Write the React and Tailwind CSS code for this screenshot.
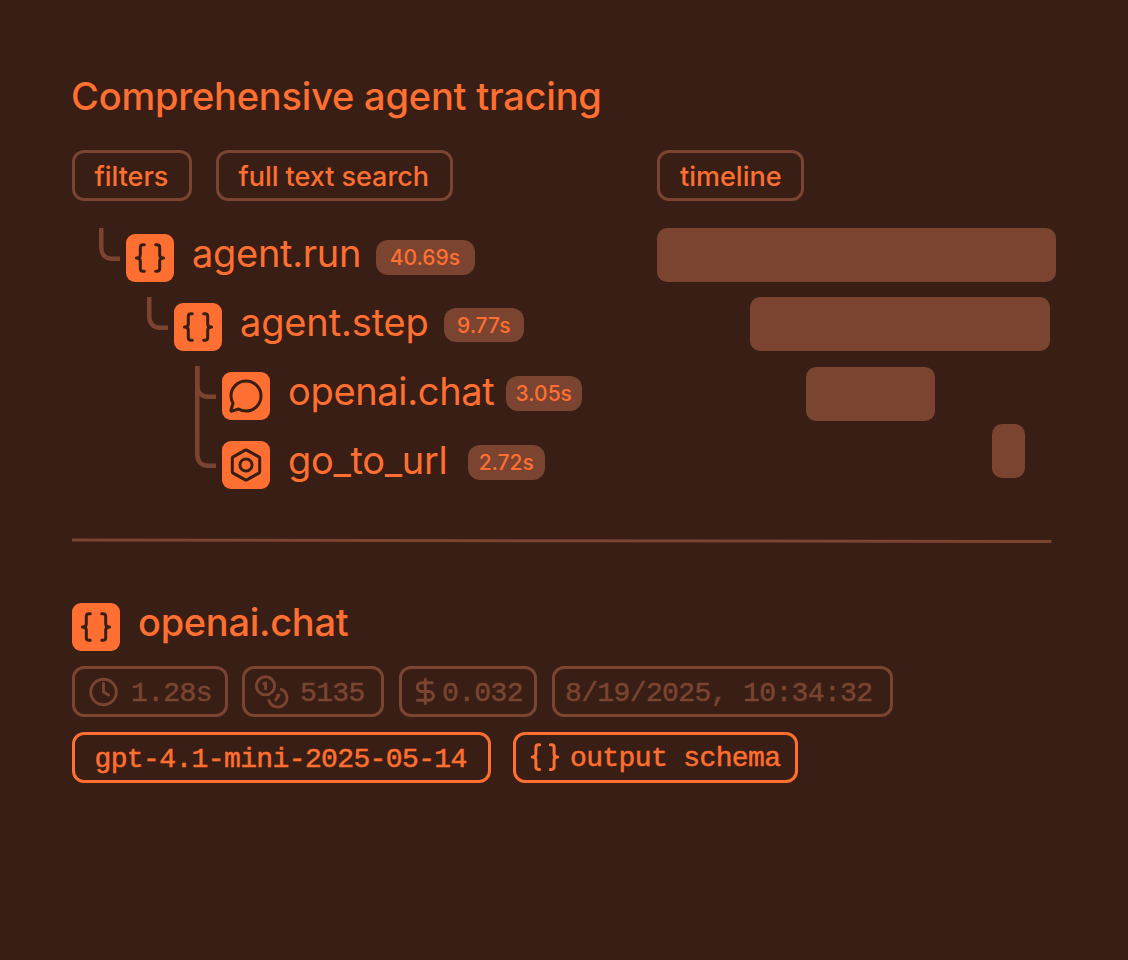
const LEFT_BRACE = 'M18.3 10.8h-1.2c-1.7 0-2.8 1.1-2.8 2.8v7.4c0 1.8-1.4 3-3.9 3 2.5 0 3.9 1.2 3.9 3v7.4c0 1.7 1.1 2.8 2.8 2.8h1.2';
const RIGHT_BRACE = 'M29.7 10.8h1.2c1.7 0 2.8 1.1 2.8 2.8v7.4c0 1.8 1.4 3 3.9 3-2.5 0-3.9 1.2-3.9 3v7.4c0 1.7-1.1 2.8-2.8 2.8h-1.2';

function Glyph({ kind }) {
  return (
    <svg
      viewBox="0 0 48 48"
      className="h-12 w-12 shrink-0 rounded-[9px] bg-[#ff6f31] text-[#381e14]"
      fill="none"
      stroke="currentColor"
      strokeWidth="3"
      strokeLinecap="round"
      strokeLinejoin="round"
    >
      {kind === 'braces' && (
        <>
          <path d={LEFT_BRACE} />
          <path d={RIGHT_BRACE} />
        </>
      )}
      {kind === 'chat' && (
        <path d="M24 39C32.28 39 39 32.28 39 24S32.28 9 24 9 9 15.72 9 24c0 2.73.73 5.29 2 7.5L8.9 38.1c-.2.7.3 1.2 1 1.1L16.5 37c2.2 1.28 4.77 2 7.5 2Z" />
      )}
      {kind === 'hex' && (
        <>
          <path d="M23.3 9.1a1.5 1.5 0 0 1 1.4 0l12.2 6.8a1.5 1.5 0 0 1 .8 1.3v13.6a1.5 1.5 0 0 1-.8 1.3l-12.2 6.8a1.5 1.5 0 0 1-1.4 0l-12.2-6.8a1.5 1.5 0 0 1-.8-1.3V17.2a1.5 1.5 0 0 1 .8-1.3Z" />
          <circle cx="24" cy="24" r="6.1" />
        </>
      )}
    </svg>
  );
}

function Connector({ continues }) {
  return (
    <svg
      viewBox="0 0 27 54"
      className="h-[54px] w-[27px] shrink-0 overflow-visible"
      fill="none"
      stroke="#7a4430"
      strokeWidth="4.5"
    >
      {continues && <path d="M2.25 0V70" />}
      <path d="M2.25 0V19.5C2.25 26 6 30.75 13 30.75H21" />
    </svg>
  );
}

function TreeRow({ indent, kind, name, nameClass, time, timeClass, continues }) {
  return (
    <div className={`flex h-[54px] ${indent}`}>
      <Connector continues={continues} />
      <div className="pt-1.5">
        <Glyph kind={kind} />
      </div>
      <span className={`ml-[18px] block shrink-0 whitespace-nowrap text-[38px] leading-[51px] ${nameClass}`}>
        {name}
      </span>
      <span
        className={`block h-[34.5px] shrink-0 rounded-xl bg-[#7a4430] text-center text-[21px] font-medium leading-[35px] ${timeClass}`}
      >
        {time}
      </span>
    </div>
  );
}

function Pill({ className, children }) {
  return (
    <div className={`flex h-[51px] shrink-0 items-center whitespace-pre rounded-xl border-3 ${className}`}>
      {children}
    </div>
  );
}

const MONO = "font-['Liberation_Mono',monospace] text-[28px] leading-[41px] tracking-[-0.62px] [-webkit-text-stroke:0.5px]";

export default function App() {
  return (
    <main className="flex h-[960px] w-[1128px] flex-col overflow-hidden bg-[#381e14] pl-[72px] font-['Inter',sans-serif] text-[#ff6f31]">
      <h1 className="mt-[72px] h-[78px] whitespace-nowrap text-[38px] font-medium leading-[49px] tracking-[-0.21px] -indent-px">
        Comprehensive agent tracing
      </h1>

      <section className="flex">
        <div className="w-[585px] shrink-0">
          <div className="flex gap-6 text-[27px] font-medium tracking-[-0.04px]">
            <Pill className="w-[120px] border-[#7a4430] pl-[19.5px] pt-1">filters</Pill>
            <Pill className="w-[237px] border-[#7a4430] pl-[19.5px] pt-1">full text search</Pill>
          </div>
          <div className="mt-[27px] flex flex-col gap-[15px]">
            <TreeRow indent="ml-[27px]" kind="braces" name="agent.run" nameClass="w-[184.4px] tracking-[-0.3px]" time="40.69s" timeClass="mt-3 w-[99px] pr-0.5" />
            <TreeRow indent="ml-[75px]" kind="braces" name="agent.step" nameClass="w-[204px] tracking-[-0.15px]" time="9.77s" timeClass="mt-[10.5px] w-[79.5px]" />
            <TreeRow indent="ml-[123px]" kind="chat" name="openai.chat" nameClass="w-[217.5px] tracking-[-0.33px]" time="3.05s" timeClass="mt-[10.4px] w-[76.5px]" continues />
            <TreeRow indent="ml-[123px]" kind="hex" name="go_to_url" nameClass="w-[180px] tracking-[-0.3px]" time="2.72s" timeClass="mt-[10.4px] w-[76.5px]" />
          </div>
        </div>
        <div className="w-[399px]">
          <Pill className="w-[147px] border-[#7a4430] pl-5 pt-1 text-[27px] font-medium">timeline</Pill>
          <div className="mt-[27px] h-[54px] w-[399px] rounded-[10px] bg-[#7a4430]" />
          <div className="ml-[93px] mt-[15px] h-[54px] w-[300px] rounded-[10px] bg-[#7a4430]" />
          <div className="ml-[148.5px] mt-[16.4px] h-[54px] w-[129px] rounded-[10px] bg-[#7a4430]" />
          <div className="ml-[334.5px] mt-[3px] h-[54px] w-[33px] rounded-[10px] bg-[#7a4430]" />
        </div>
      </section>

      <svg viewBox="0 0 980 6" className="mt-[48px] h-1.5 w-[980px] shrink-0" fill="none" stroke="#7a4430" strokeWidth="3">
        <path d="M0 3 979.5 4.5" />
      </svg>

      <div className="mt-[60px] flex h-12 shrink-0">
        <Glyph kind="braces" />
        <h2 className="ml-[18px] whitespace-nowrap text-[38px] font-medium leading-[39px] tracking-[-0.3px]">openai.chat</h2>
      </div>

      <div className={`mt-[15px] flex text-[#7a4430] ${MONO}`}>
        <Pill className="w-[156px] border-[#7a4430] pl-3.5">
          <svg viewBox="0 0 30 30" className="mr-3 h-[30px] w-[30px] shrink-0" fill="none" stroke="currentColor" strokeWidth="2.9" strokeLinecap="round" strokeLinejoin="round">
            <circle cx="14.5" cy="15" r="12.8" />
            <path d="M14.5 6.5V15L19.5 18" />
          </svg>
          <span className="pt-1">1.28s</span>
        </Pill>
        <Pill className="ml-[13.5px] w-[142.5px] border-[#7a4430] pl-2.5">
          <svg viewBox="0 0 36 36" className="mr-[9.5px] h-9 w-9 shrink-0" fill="none" stroke="currentColor" strokeWidth="2.9" strokeLinecap="round" strokeLinejoin="round">
            <circle cx="10.5" cy="11.8" r="9.1" />
            <path d="M8.9 9.7 10.6 9.1V14.9" />
            <path d="M26.2 15.3A9.2 9.2 0 1 1 14 26.5" />
            <path d="M22.6 21.3 24 21.2 20.6 25.8" />
          </svg>
          <span className="pt-1">5135</span>
        </Pill>
        <Pill className="ml-[15px] w-[138px] border-[#7a4430] pl-3.5">
          <svg viewBox="0 0 20 28" className="mr-[6px] h-7 w-5 shrink-0" fill="none" stroke="currentColor" strokeWidth="3" strokeLinecap="round" strokeLinejoin="round">
            <path d="M16.3 4.8H5.6a4.1 4.1 0 0 0 0 8.6H13a4.4 4.4 0 0 1 0 8.8H1.5M9.3 1.4V25.4" />
          </svg>
          <span className="pt-1">0.032</span>
        </Pill>
        <Pill className="ml-[15px] w-[341px] border-[#7a4430] pl-2.5 pt-1">8/19/2025, 10:34:32</Pill>
      </div>

      <div className={`mt-[15px] flex ${MONO}`}>
        <Pill className="w-[419px] border-[#ff6f31] pl-[19.5px] pt-1">gpt-4.1-mini-2025-05-14</Pill>
        <Pill className="ml-[22px] w-[285px] border-[#ff6f31] pl-[14px]">
          <svg viewBox="8 8 32 32" className="mb-px mr-[10px] h-[30px] w-[30px] shrink-0" fill="none" stroke="currentColor" strokeWidth="3.2" strokeLinecap="round" strokeLinejoin="round">
            <path d={LEFT_BRACE} />
            <path d={RIGHT_BRACE} />
          </svg>
          <span className="pt-0.5">output schema</span>
        </Pill>
      </div>
    </main>
  );
}
